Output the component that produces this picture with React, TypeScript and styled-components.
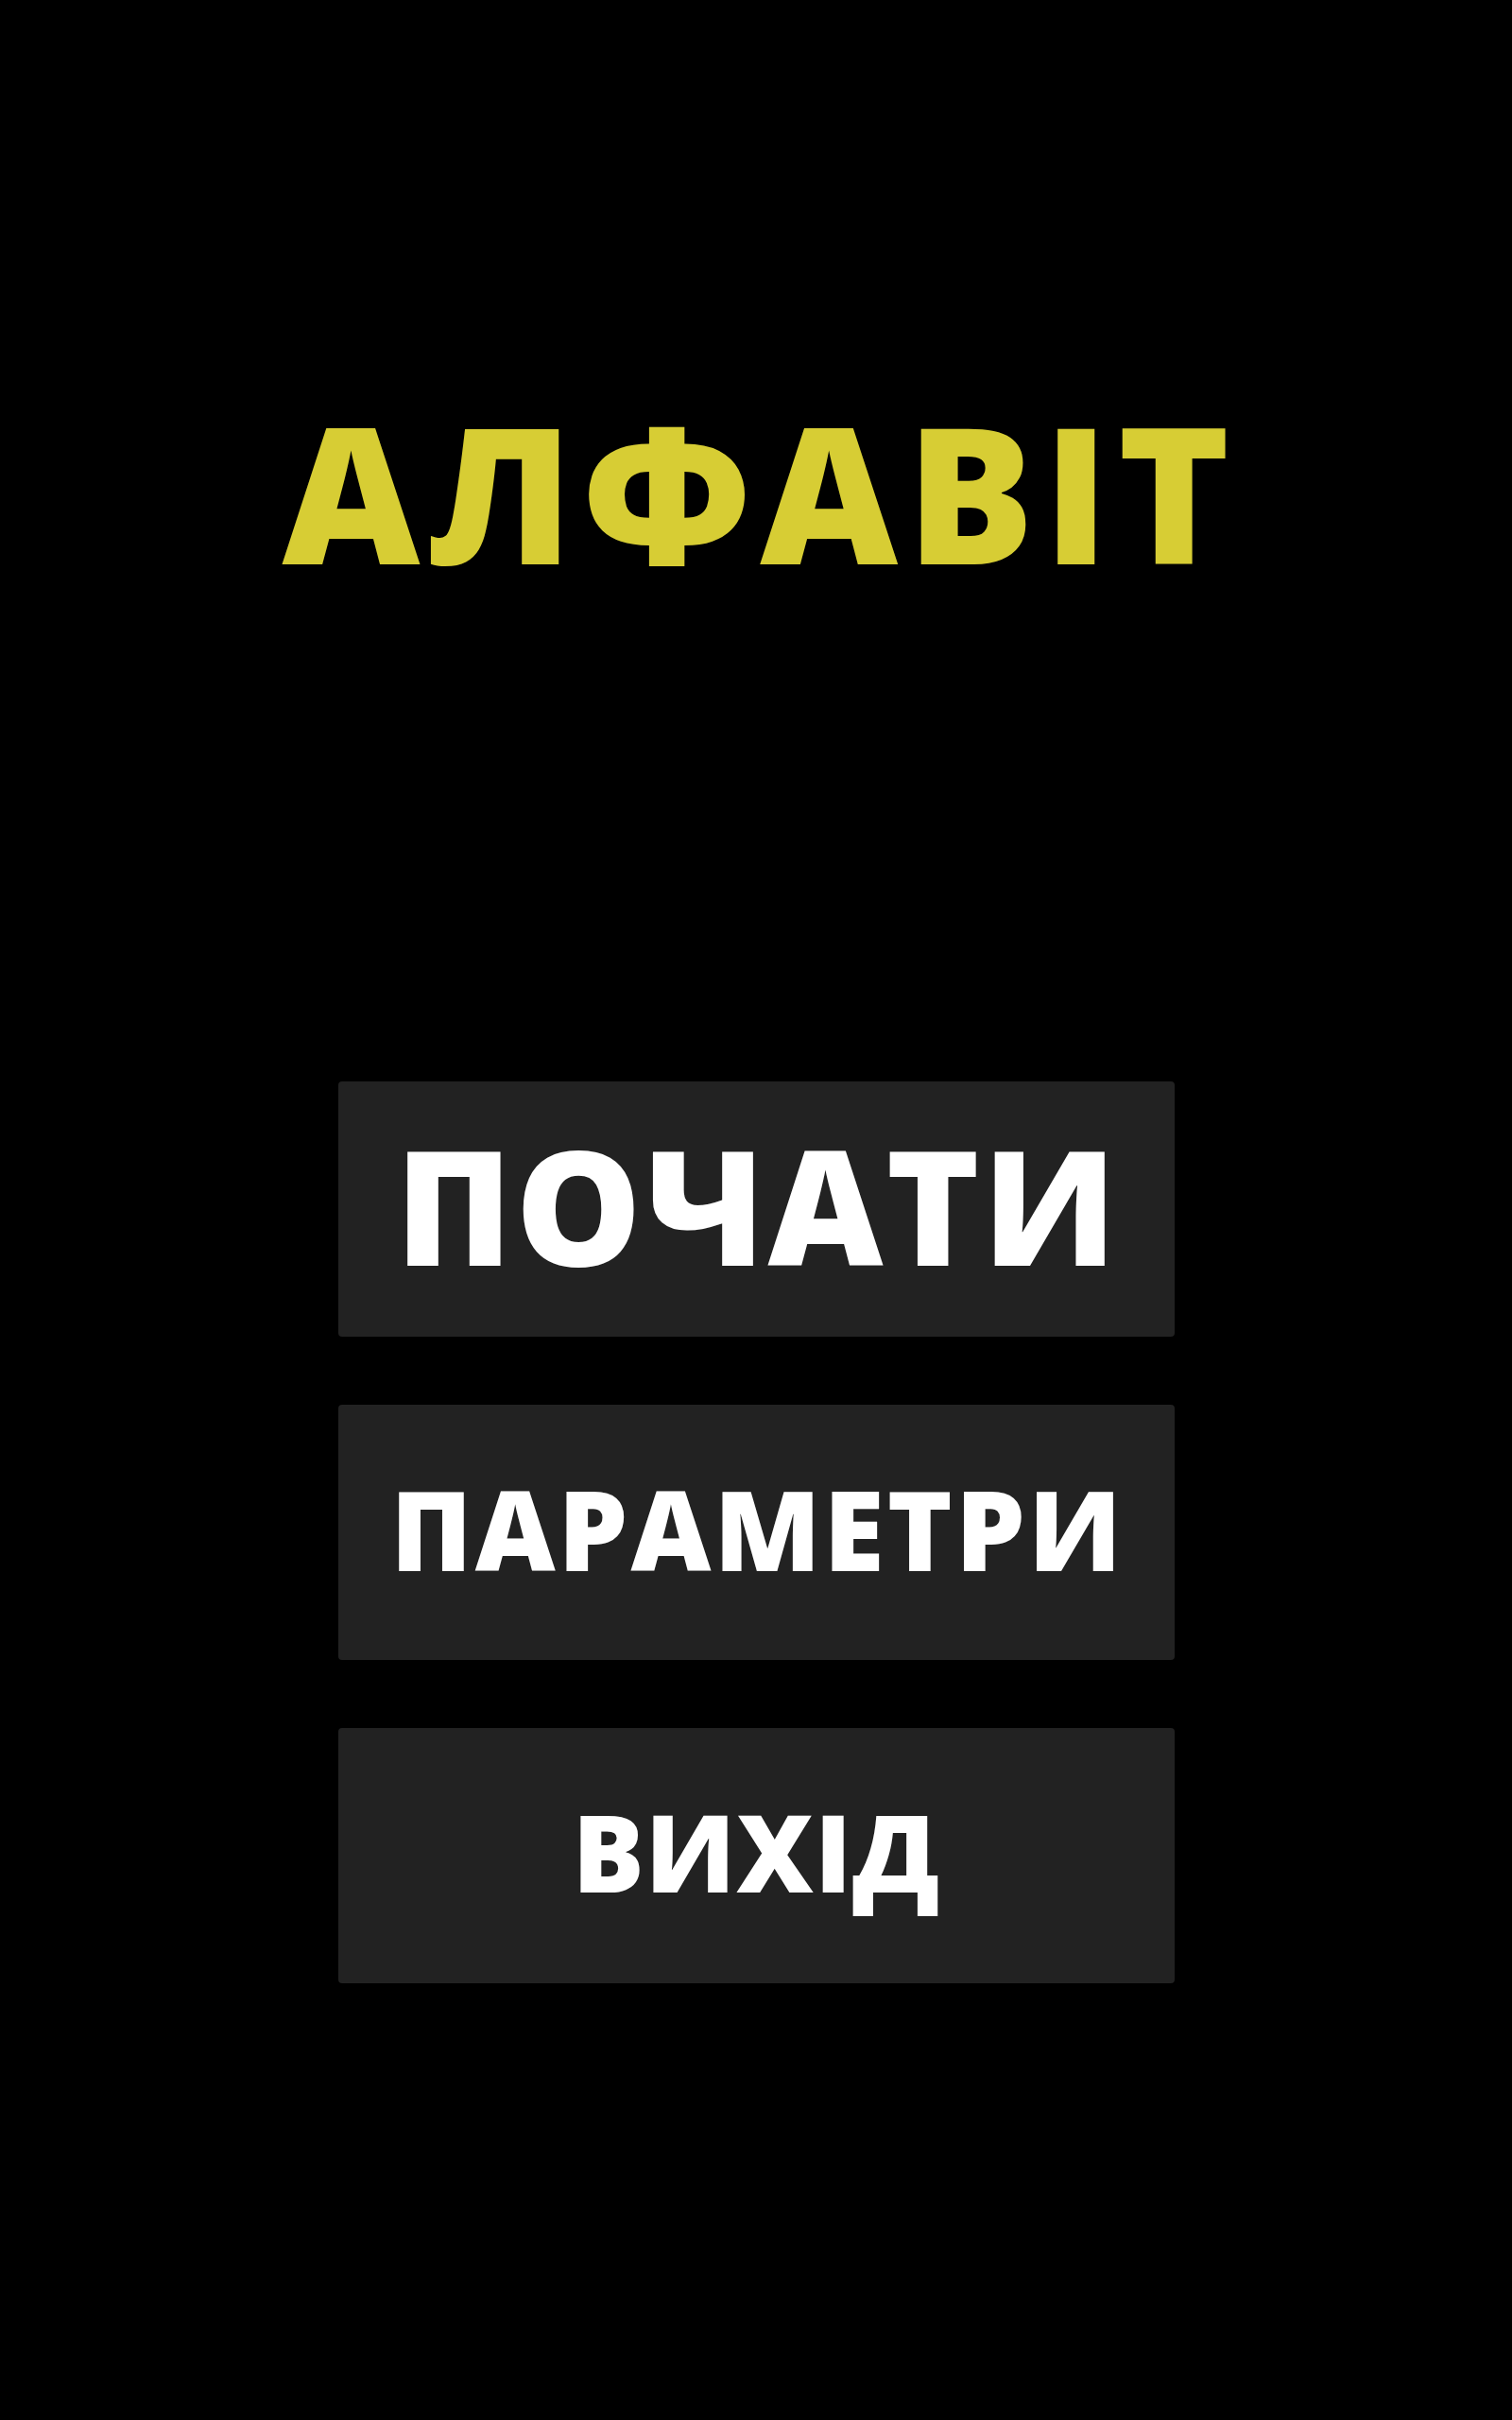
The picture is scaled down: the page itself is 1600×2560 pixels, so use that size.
import React from "react";
import styled, { createGlobalStyle } from "styled-components";

const Global = createGlobalStyle`
  html, body { margin: 0; padding: 0; background: #000; }
  * { box-sizing: border-box; }
`;

const Screen = styled.div`
  min-height: 2560px;
  width: 1600px;
  background: #000;
  display: flex;
  flex-direction: column;
  align-items: center;
  font-family: "Open Sans", "DejaVu Sans", sans-serif;
`;

const Title = styled.h1`
  margin: 419px 0 0;
  font-size: 201px;
  line-height: 1;
  font-weight: 800;
  color: #d7cd34;
  letter-spacing: 9px;
  margin-right: -9px;
`;

const Menu = styled.nav`
  margin-top: 524px;
  display: flex;
  flex-direction: column;
  gap: 72px;
`;

const MenuButton = styled.button<{ $size: number; $spacing: number }>`
  width: 885px;
  height: 270px;
  border: none;
  border-radius: 4px;
  background: #222222;
  color: #ffffff;
  font-family: "Open Sans", "DejaVu Sans", sans-serif;
  font-weight: 800;
  font-size: ${(p) => p.$size}px;
  letter-spacing: ${(p) => p.$spacing}px;
  line-height: 1;
  display: flex;
  align-items: center;
  justify-content: center;
  padding: 0 0 10px ${(p) => p.$spacing}px;
  cursor: pointer;
`;

export default function App() {
  return (
    <>
      <Global />
      <Screen>
        <Title>АЛФАВІТ</Title>
        <Menu>
          <MenuButton $size={168} $spacing={3}>ПОЧАТИ</MenuButton>
          <MenuButton $size={117} $spacing={3}>ПАРАМЕТРИ</MenuButton>
          <MenuButton $size={113} $spacing={1}>ВИХІД</MenuButton>
        </Menu>
      </Screen>
    </>
  );
}
